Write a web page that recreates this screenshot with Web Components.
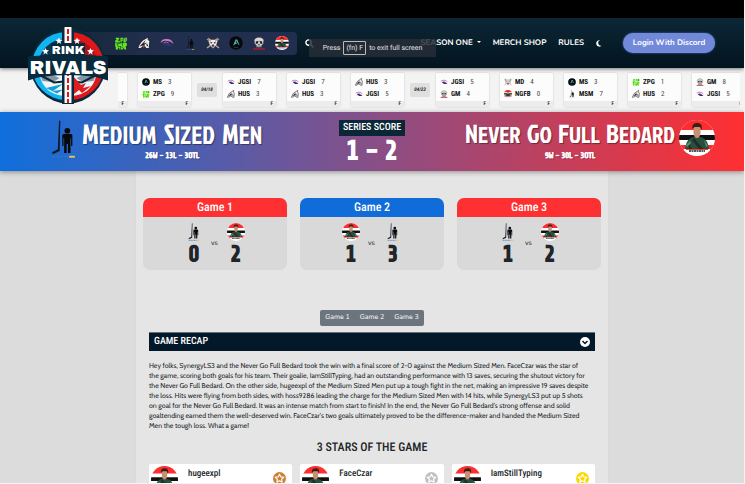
<!DOCTYPE html>
<html lang="en">
<head>
<meta charset="utf-8">
<title>Rink Rivals</title>
<style>
body { margin: 0; background: #dcdcdc; color: #212529; font: 7px/10px Nunito, Lato, sans-serif; text-rendering: geometricPrecision; --cond: "Roboto Condensed", "Open Sans Condensed", sans-serif; --sport: "Jockey One", "Roboto Condensed", sans-serif; --digits: "Share Tech", "Roboto Condensed", sans-serif; --navy: #03192a; }
</style>
</head>
<body>
<rr-app></rr-app>
<script>
const bedard = `<svg viewBox="0 0 36 36"><clipPath id="c"><circle cx="18" cy="18" r="18"/></clipPath><g clip-path="url(#c)"><path fill="#fff" d="M0 0h36v36H0z"/><path fill="#ff2d2f" d="M0 0h36v10H0z"/><path fill="#111" d="M0 15h36v5H0z"/><path fill="#ff2d2f" d="M0 25h8v7H0zM28 25h8v7h-8z"/><path fill="#27503c" d="M6 29c1-8 4-11 9-12h6c5 1 8 4 9 12z"/><path fill="#222c2c" d="M15 18l9 11h-4l-7-9zM9 22l4 7h-3z"/><path fill="#55906c" d="M7 25l4-4 1 2-4 4zM25 20l4 6-2 1z"/><path fill="#c98f73" d="M14.500 7c0-3 7-3 7 0v6c0 3-2 5-3.500 5s-3.500-2-3.500-5z"/><path fill="#382217" d="M13.500 9c-1-5 2-6 5-6 4 0 5 3 4 7l-1.500-3-5.500 0z"/><path fill="#fff" d="M5 29h26v4H5z"/><path stroke="#222" stroke-width="1.4" stroke-dasharray="2 .5" d="M10 31h16"/><path stroke="#e33" d="M7 29.5h22"/></g></svg>`;
const art = {
 ngfb: bedard,
 msm: `<svg viewBox="0 0 36 60"><path d="M11 1L9 46l-9 5 1 3 11-5L13 1z" fill="#111827"/><g transform="translate(-3 0)" fill="#08090c"><circle cx="27" cy="17" r="4.5"/><path d="M19 24q0-2 3-2h10q3 0 3 2v17h-2V29h-1v23h-4V38h-2v14h-4V29h-1v12h-2z"/></g><path stroke="#2879c8" stroke-width="2" stroke-dasharray="5 1" d="M0 58h27"/><path stroke="#e7c94b" stroke-width="3" d="M27 58h9"/></svg>`,
 zpg: `<svg viewBox="0 0 24 24"><path d="M3 3h6v2L6 8h4v3H2V8l3-3H3zM11 3h5v5h-3v3h-2zM17 4l4-2 2 4-3 5h-4zM2 12h4v6H2zM7 13h4l3-1v5H7zM15 12h7v5h-7zM3 18h8v5H9v-3H7v3H3zM12 17h8l1 6h-3l-2-3-1 3h-3z" fill="#62e51c"/><path d="M18 4l3 2-2 3" stroke="#687978" stroke-width="2" fill="none"/><path d="M4 14l4-1M12 19l4 1M13 6h3" stroke="#175d17"/></svg>`,
 hus: `<svg viewBox="0 0 24 24"><path d="M1 22Q4 9 17 3l3-2-1 5 3 3-1 13-6-1-3-5-5 5z" fill="#eee" stroke="#15151a" stroke-width="1.5"/><path d="M4 18L15 7l-3 6 5-2-5 5zM17 12l3 7-4-3z" fill="#252529"/><path d="M10 17l4 1-3 2z" fill="#b9564b"/></svg>`,
 jgsi: `<svg viewBox="0 0 28 20"><path d="M1 10Q3 1 14 2q10 0 13 10-7-7-13-6Q7 4 1 10z" fill="#c77fbd"/><path d="M5 14q6-6 12-4l9 5q-7 3-13 1-2-3-8-2z" fill="#24386f"/><path d="M7 10l6-2 4 2" stroke="#e94a8a" stroke-width="2" fill="none"/></svg>`,
 md: `<svg viewBox="0 0 28 26"><path d="M2 5l24 18M26 5L2 23" stroke="#b3a79e" stroke-width="3"/><path d="M4 2l6 4h8l6-4-1 8-2 7-7 7-7-7-2-7z" fill="#eee" stroke="#3c2e2b"/><path d="M8 10l5 2-3 3zM20 10l-5 2 3 3zM11 18l3-3 3 3-3 4z" fill="#493a38"/><path d="M5 6l4 2M23 6l-4 2" stroke="#b8593b" stroke-width="2"/></svg>`,
 ms: `<svg viewBox="0 0 24 24"><circle cx="12" cy="12" r="11.5" fill="#05090c"/><path d="M7 17l4-11h3l4 10-5-3-4 2z" fill="#56b9c1"/><path d="M12 8l1 4 3 2M9 18h3" stroke="#05090c"/><path d="M8 19l8 1" stroke="#315e66"/></svg>`,
 gm: `<svg viewBox="0 0 24 26"><path d="M3 9c0-9 18-9 18 0l-1 6-3 2v4H7v-4l-3-2z" fill="#d8d8d6" stroke="#343436"/><path d="M6 10l5-1-1 5-4 1zM18 10l-5-1 1 5 4 1zM12 14l2 3h-4z" fill="#25252a"/><path d="M9 18v3M12 18v3M15 18v3" stroke="#333"/><path d="M1 24h22" stroke="#b51c27" stroke-width="2.5"/></svg>`
};
function element(name, render) {
  customElements.define(name, class extends HTMLElement {
    connectedCallback() {
      this.attachShadow({ mode: 'open' }).innerHTML = `<style>*{box-sizing:border-box}h1,h2,h3,p{margin:0}button{text-rendering:inherit}</style>` + render(this);
    }
  });
}
element('team-logo', e => `<style>:host{display:inline-grid;width:var(--w,8px);height:var(--w,8px)}svg{width:100%;height:100%;display:block;min-height:0}</style>${art[e.getAttribute('team')]}`);

element('rink-logo', () => `<style>:host{display:block}svg{display:block;width:100%}text{font-family:"Archivo Black",Inter,sans-serif;font-weight:400}</style>
<svg viewBox="0 0 160 156" role="img" aria-label="Rink Rivals">
<circle cx="80" cy="80" r="75" fill="#082a3c"/><path d="M76 12A68 68 0 0 0 76 148z" fill="#12b4f2"/><path d="M84 12A68 68 0 0 1 84 148z" fill="#df1719"/>
<path d="M74 26A54 54 0 0 0 74 134z" fill="#0b3850"/><path d="M86 26A54 54 0 0 1 86 134z" fill="#a91320"/>
<path d="M23 96q57-14 114 0-7 40-50 44H73Q30 136 23 96z" fill="#eef5f8"/><path d="M25 100l20-4 18 8-12 8-22-2z" fill="#8295a4"/><path d="M135 100l-20-4-18 8 12 8 22-2z" fill="#8295a4"/>
<path d="M24 98l28 15 20-2M136 98l-28 15-20-2" stroke="#0a2635" stroke-width="4" fill="none"/><path d="M36 124l34-8-20 14 20-3-12 8z" fill="#159ed5"/><path d="M90 100l16 18 10-4-6 10 16-4-18 14-6-6-10 8z" fill="#dd1d20"/>
<path d="M68 4h24v152H68z" fill="#082a3c"/><path d="M73 2h14v152H73z" fill="#f9f9f9"/><path d="M80 6v148" stroke="#df1719" stroke-width="4" stroke-dasharray="10 4"/>
<path d="M46 34h68v30H46z" fill="#082a3c"/><text x="80" y="56" text-anchor="middle" font-size="23" fill="#fff">RINK</text>
<path d="M0 61q80-8 160 0v48l-24-7q-56-8-112 0l-24 7z" fill="#082a3c"/><text x="80" y="95" text-anchor="middle" font-size="38" fill="#fff">RIVALS</text>
<g fill="#fff"><path d="M62 23l2 4 5 1-4 3 1 5-4-3-4 3 1-5-4-3 5-1zM35 44l2 4 5 1-4 3 1 5-4-3-4 3 1-5-4-3 5-1zM98 23l2 4 5 1-4 3 1 5-4-3-4 3 1-5-4-3 5-1zM125 44l2 4 5 1-4 3 1 5-4-3-4 3 1-5-4-3 5-1z"/></g></svg>`);

element('site-header', () => `<style>
:host{display:block;border-top:18px solid #000;background:linear-gradient(#0c2736,#03141f);box-shadow:0 1px 4px #0008;position:relative;z-index:2}
header{height:50px;display:flex;align-items:center;padding:0 29px 0 28px;color:#fff}
.brand{width:80px;align-self:flex-start;margin-top:8px;height:42px;overflow:visible;z-index:1}
.teams{display:flex;gap:9px;background:linear-gradient(90deg,#14283b,#222e4d 30%);margin-left:-28px;padding:0 8px 0 34px;height:23px;align-items:center;border-radius:4px}
.teams team-logo{--w:14px}
.search{margin-left:8px}button{font:inherit;color:inherit;background:none;border:0;padding:0;display:flex}
nav{margin-left:auto;display:flex;align-items:center;gap:12px;font-size:8px;font-weight:700}
a{color:inherit;text-decoration:none;white-space:nowrap}
.caret{display:inline-block;border:2px solid transparent;border-top-color:#fff;border-bottom:0;margin:0 0 2px 4px}
.login{background:#7289da;border-radius:10px;height:20px;width:92px;align-items:center;justify-content:center;margin-left:9px;white-space:nowrap;box-shadow:0 0 2px #4c78e0}
.toast{position:absolute;left:309px;top:21px;width:127px;height:18px;background:#272e38d8;color:#e2e4e6;display:flex;align-items:center;justify-content:center;gap:3px;font:7px/10px Roboto,sans-serif;white-space:nowrap}
kbd{font:inherit;border:1px solid #bbb;border-radius:1px;padding:1px 2px}
</style><header><a class="brand" href="#"><rink-logo></rink-logo></a>
<div class="teams">${['zpg','hus','jgsi','msm','md','ms','gm','ngfb'].map(t=>`<team-logo team="${t}"></team-logo>`).join('')}</div>
<button class="search" aria-label="Search"><svg width="9" height="9" viewBox="0 0 9 9" fill="none" stroke="#fff" stroke-width="1.4"><circle cx="3.6" cy="3.6" r="2.7"/><path d="M5.6 5.6L8.4 8.4"/></svg></button>
<nav><a href="#">SEASON ONE<i class="caret"></i></a><a href="#">MERCH SHOP</a><a href="#">RULES</a><button aria-label="Dark mode"><svg width="6" height="7" viewBox="0 0 6 7"><path d="M4 .3A3.2 3.2 0 1 0 5.8 5.6 2.8 2.8 0 0 1 4 .3z" fill="#fff"/></svg></button><button class="login">Login With Discord</button></nav></header>
<div class="toast">Press <kbd>(fn) F</kbd> to exit full screen</div>`);

element('score-card', e => {
 const row = s => { const [t,n] = s.split(' '); return `<div><team-logo team="${t.toLowerCase()}"></team-logo><b>${t}</b><span>${n}</span></div>`; };
 const a = e.getAttribute('a');
 return `<style>:host{display:flex;flex-direction:column;flex:none;width:${a ? 53 : 9}px;height:34px;background:#fcfcfc;border-radius:1px;box-shadow:0 0 2px #0003;font:7px/12px var(--cond)}
 section{padding:3px 4px 1px 4px;flex:1}div{display:flex;align-items:center;gap:3px;height:12px;color:#111}span{margin-left:3px;color:#444}
 footer{background:#ececec;height:6px;font:bold 5px/6px var(--cond);text-align:right;padding-right:3px}</style>
 <section>${a ? row(a) + row(e.getAttribute('b')) : ''}</section><footer>F</footer>`; });

element('score-strip', () => {
 const games = ['','MS 3|ZPG 9','04/18','JGSI 7|HUS 3','JGSI 7|HUS 3','HUS 3|JGSI 5','04/23','JGSI 5|GM 4','MD 4|NGFB 0','MS 3|MSM 7','ZPG 1|HUS 2','GM 8|JGSI 5'];
 return `<style>:host{display:block;background:#f3f3f3;padding:4px 4px 4px 118px}
  .track{display:flex;align-items:center;gap:6px;overflow:hidden;padding:1px 0}score-card+score-card{margin-left:5px}
  time{flex:none;width:20px;height:14px;background:#dfdfdf;border-radius:2px;text-align:center;font:italic bold 5px/14px var(--cond);color:#222}</style>
  <div class="track">${games.map(g => { const [a,b] = g.split('|'); return b ? `<score-card a="${a}" b="${b}"></score-card>` : a ? `<time>${a}</time>` : '<score-card></score-card>'; }).join('')}</div>`;
});

element('matchup-banner', () => `<style>
:host{display:block;background:linear-gradient(90deg,#0f6fdc,#ff2f31);color:#fff;box-shadow:0 1px 5px #0006;position:relative;z-index:1}
section{display:grid;grid-template-columns:minmax(0,1fr) 66px minmax(0,1fr);height:59px;padding:8px 29px 0}
.team{display:flex;gap:7px}.left{padding-left:23px}.right{justify-content:flex-end;gap:4px}
h1{font:23px/28px var(--sport);text-transform:uppercase;white-space:nowrap;text-shadow:1px 1px 1px #0006;display:flex;gap:6px;align-items:baseline}h1 span::first-letter{font-size:26px}
.left h1{font-size:25px;gap:7px}.left h1 span::first-letter{font-size:28px}
.team div{text-align:center}.team p{font:bold 8px/12px var(--digits);padding-top:1px;text-shadow:1px 1px 1px #0005;-webkit-text-stroke:.3px #fff}
.score{text-align:center}h2{background:#0b2737;font:500 10px/16px var(--cond);white-space:nowrap}.score p{font:bold 26px/32px var(--digits);-webkit-text-stroke:1px #fff}
team-logo{--w:36px;flex:none}.left team-logo{width:23px;height:38px}
</style><section><div class="team left"><team-logo team="msm"></team-logo><div><h1><span>Medium</span> <span>Sized</span> <span>Men</span></h1><p>26W - 13L - 3OTL</p></div></div>
<div class="score"><h2>SERIES SCORE</h2><p>1 - 2</p></div>
<div class="team right"><div><h1><span>Never</span> <span>Go</span> <span>Full</span> <span>Bedard</span></h1><p>9W - 30L - 3OTL</p></div><team-logo team="ngfb"></team-logo></div></section>`);

element('game-card', e => { const [a,x,b,y] = e.getAttribute('result').split(' '); return `<style>
:host{display:block;background:#d9d9d9;border-radius:7px;overflow:hidden}
h2{background:${e.getAttribute('color')};color:#fff;text-align:center;font:500 12px/19px var(--cond)}
section{display:flex;justify-content:center;gap:7px;height:53px;padding-top:6px}.t{width:20px;text-align:center}team-logo{--w:18px;display:grid;margin:0 auto}
p{font:bold 22px/28px var(--digits);-webkit-text-stroke:1px #212529}span{line-height:42px;width:8px}</style><h2><slot></slot></h2>
<section><div class="t"><team-logo team="${a}"></team-logo><p>${x}</p></div><span>vs</span><div class="t"><team-logo team="${b}"></team-logo><p>${y}</p></div></section>`; });

element('star-card', e => `<style>:host{display:flex;background:#fff;border-radius:2px;height:60px;padding:2px 6px 0 2px}team-logo{--w:27px}
h3{flex:1;font:500 9px/16px var(--cond);padding-left:10px}svg{margin-top:6px}</style><team-logo team="ngfb"></team-logo><h3><slot></slot></h3>
<svg width="13" height="13" viewBox="0 0 24 24"><circle cx="12" cy="12" r="12" fill="${e.getAttribute('color')}"/><path d="M12 4l2.3 5 5.5.7-4 3.8 1 5.5-4.800-2.700L7.200 19l1-5.500-4-3.800 5.500-.7z" fill="none" stroke="#fff" stroke-width="2.2" stroke-linejoin="round"/></svg>`);

element('game-report', () => `<style>
:host{display:block;flex:1;min-height:0;background:#e5e5e5;width:calc(100% - 272px);box-sizing:border-box;margin:0 auto;padding:27px 7px 0;box-shadow:0 0 1px #0001}
.games{display:grid;grid-template-columns:repeat(3,1fr);gap:13px}
.tabs{display:flex;width:max-content;margin:40px auto 6px;background:#6c757d;border-radius:2px}
.tabs button{border:0;background:none;color:#fff;font:7px/16px Nunito,Lato,sans-serif;padding:0 5px}
article{padding:0 6px}.recap{display:flex;width:100%;border:0 solid #63717c;border-top-width:1px;background:var(--navy);color:#fff;font:500 10px/18px var(--cond);padding:0 5px;justify-content:space-between;align-items:center}
p{padding:10px 0 9px;font-family:Cabin,Nunito,sans-serif;white-space:nowrap}h2{font:500 12px/14px var(--cond);text-align:center}
.stars{display:grid;grid-template-columns:repeat(3,1fr);gap:8px;padding:10px 0 0}</style>
<div class="games"><game-card color="#ff3031" result="msm 0 ngfb 2">Game 1</game-card><game-card color="#0f6cd8" result="ngfb 1 msm 3">Game 2</game-card><game-card color="#ff3031" result="msm 1 ngfb 2">Game 3</game-card></div>
<div class="tabs"><button>Game 1</button><button>Game 2</button><button>Game 3</button></div>
<article><button class="recap" aria-expanded="true">GAME RECAP<svg width="10" height="10" viewBox="0 0 20 20"><circle cx="10" cy="10" r="10" fill="#fff"/><path d="M5 8l5 5 5-5" fill="none" stroke="#03192a" stroke-width="3"/></svg></button>
<p>Hey folks, SynergyLS3 and the Never Go Full Bedard took the win with a final score of 2-0 against the Medium Sized Men. FaceCzar was the star of<br>
the game, scoring both goals for his team. Their goalie, IamStillTyping, had an outstanding performance with 13 saves, securing the shutout victory for<br>
the Never Go Full Bedard. On the other side, hugeexpl of the Medium Sized Men put up a tough fight in the net, making an impressive 19 saves despite<br>
the loss. Hits were flying from both sides, with hoss9286 leading the charge for the Medium Sized Men with 14 hits, while SynergyLS3 put up 5 shots<br>
on goal for the Never Go Full Bedard. It was an intense match from start to finish! In the end, the Never Go Full Bedard's strong offense and solid<br>
goaltending earned them the well-deserved win. FaceCzar's two goals ultimately proved to be the difference-maker and handed the Medium Sized<br>
Men the tough loss. What a game!</p>
<h2>3 STARS OF THE GAME</h2><div class="stars"><star-card color="#cd7f32">hugeexpl</star-card><star-card color="#c0c0c0">FaceCzar</star-card><star-card color="#ffd700">IamStillTyping</star-card></div></article>`);

element('rr-app', () => `<style>:host{display:flex;flex-direction:column;height:100vh;overflow:hidden;box-sizing:border-box;border:solid #f4f4f4;border-width:0 1px 1px 0}site-header,score-strip,matchup-banner{flex:none}</style>
<site-header></site-header><score-strip></score-strip><matchup-banner></matchup-banner><game-report></game-report>`);
</script>
</body>
</html>
